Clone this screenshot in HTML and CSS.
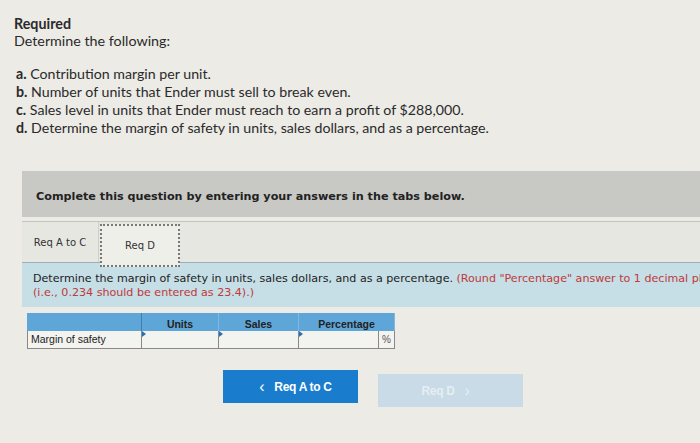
FILE: index.html
```html
<!DOCTYPE html>
<html>
<head>
<meta charset="utf-8">
<link rel="stylesheet" href="styles.css">
</head>
<body>
<div class="page">
  <div class="intro">
    <div class="req-title">Required</div>
    <div class="req-sub">Determine the following:</div>
    <ol class="tasks">
      <li><b>a.</b> Contribution margin per unit.</li>
      <li><b>b.</b> Number of units that Ender must sell to break even.</li>
      <li><b>c.</b> Sales level in units that Ender must reach to earn a profit of $288,000.</li>
      <li><b>d.</b> Determine the margin of safety in units, sales dollars, and as a percentage.</li>
    </ol>
  </div>
  <div class="panel">
    <div class="band">Complete this question by entering your answers in the tabs below.</div>
    <div class="tabs">
      <div class="tab">Req A to C</div>
      <div class="tab active">Req D</div>
    </div>
    <div class="instr">
      Determine the margin of safety in units, sales dollars, and as a percentage. <span class="red">(Round "Percentage" answer to 1 decimal place<br>(i.e., 0.234 should be entered as 23.4).)</span>
    </div>
    <div class="grid">
      <div class="h lbl"></div>
      <div class="h">Units</div>
      <div class="h">Sales</div>
      <div class="h">Percentage</div>
      <div class="c lbl">Margin of safety</div>
      <div class="c in"><span class="flag"></span></div>
      <div class="c in"><span class="flag"></span></div>
      <div class="c in pct"><span class="flag"></span><span class="box"></span><span class="sym">%</span></div>
    </div>
    <div class="nav">
      <div class="btn prev"><span class="chev">&lsaquo;</span>Req A to C</div>
      <div class="btn next">Req D<span class="chev">&rsaquo;</span></div>
    </div>
  </div>
</div>
</body>
</html>
```
FILE: styles.css
```css
html, body {
  margin: 0;
  padding: 0;
}
body {
  width: 700px;
  height: 443px;
  overflow: hidden;
  background: #ecebe6;
}
.page {
  padding-top: 15px;
}
.intro {
  padding-left: 14px;
  font-family: Lato, "Liberation Sans", sans-serif;
  color: #2a2a2a;
}
.req-title {
  font-size: 14.3px;
  font-weight: bold;
  line-height: 17px;
}
.req-sub {
  font-size: 14.3px;
  line-height: 18px;
}
.tasks {
  list-style: none;
  margin: 15px 0 0 0;
  padding: 0 0 0 2px;
  font-size: 14.2px;
  line-height: 18px;
}
.tasks b {
  font-weight: bold;
}
.panel {
  margin-top: 34px;
  padding-left: 22px;
}
.band {
  background: #c8c8c5;
  height: 46px;
  line-height: 52px;
  padding-left: 14px;
  font-family: "DejaVu Sans", Verdana, sans-serif;
  font-weight: bold;
  font-size: 11.2px;
  color: #222;
}
.tabs {
  display: flex;
  height: 40px;
  margin-top: 4px;
  background: #e7e7e2;
  border-top: 1px solid #c5c5c0;
  border-bottom: 1px solid #9fb0b4;
}
.tab {
  width: 76px;
  display: flex;
  align-items: center;
  justify-content: center;
  font-family: "DejaVu Sans", Verdana, sans-serif;
  font-size: 10px;
  color: #333;
  border-right: 1px solid #d0d0cb;
}
.tab.active {
  width: 80px;
  margin-left: 1px;
  margin-top: 2px;
  height: 43px;
  background: #efefea;
  border: 2px dotted #777;
  box-sizing: border-box;
}
.instr {
  background: #c6dee5;
  padding: 9px 0 7px 11px;
  font-family: "DejaVu Sans", Verdana, sans-serif;
  font-size: 11.1px;
  line-height: 14px;
  color: #222;
  white-space: nowrap;
  overflow: hidden;
}
.red {
  color: #c0393b;
}
.grid {
  display: grid;
  grid-template-columns: 115px 77px 80px 96px;
  grid-template-rows: 18px 18px;
  margin: 6px 0 0 5px;
  width: 368px;
  font-family: "Liberation Sans", Arial, sans-serif;
  font-size: 10.5px;
  color: #222;
}
.h {
  background: #5ea6d8;
  border-right: 1px solid #7fb8e0;
  text-align: center;
  font-weight: bold;
  line-height: 22px;
}
.h.lbl {
  border-right: 1px solid #3f7fb0;
}
.c {
  background: #f3f3ef;
  border: 1px solid #888;
  border-top: none;
  border-left: none;
  position: relative;
}
.c.lbl {
  border-left: 1px solid #888;
  padding-left: 3px;
  line-height: 16px;
}
.flag {
  position: absolute;
  left: 0;
  top: 0;
  width: 0;
  height: 0;
  border-top: 3px solid transparent;
  border-bottom: 3px solid transparent;
  border-left: 4px solid #2b6fb3;
}
.pct {
  display: flex;
  position: relative;
}
.pct .box {
  flex: 1;
  border-right: 1px solid #888;
}
.pct .sym {
  width: 15px;
  text-align: center;
  line-height: 17px;
  color: #555;
  font-size: 10px;
}
.nav {
  display: flex;
  gap: 20px;
  margin: 21px 0 0 201px;
}
.btn {
  height: 33px;
  display: flex;
  align-items: center;
  justify-content: center;
  font-family: "Liberation Sans", Arial, sans-serif;
  font-size: 12px;
  font-weight: bold;
  letter-spacing: -0.3px;
}
.btn.prev {
  width: 135px;
  background: #1a7ccc;
  color: #fff;
}
.btn.next {
  width: 145px;
  background: #c8dbe6;
  color: #e6eef3;
  margin-top: 4px;
}
.chev {
  font-size: 16px;
  font-weight: normal;
  margin: 0 10px;
}
```
